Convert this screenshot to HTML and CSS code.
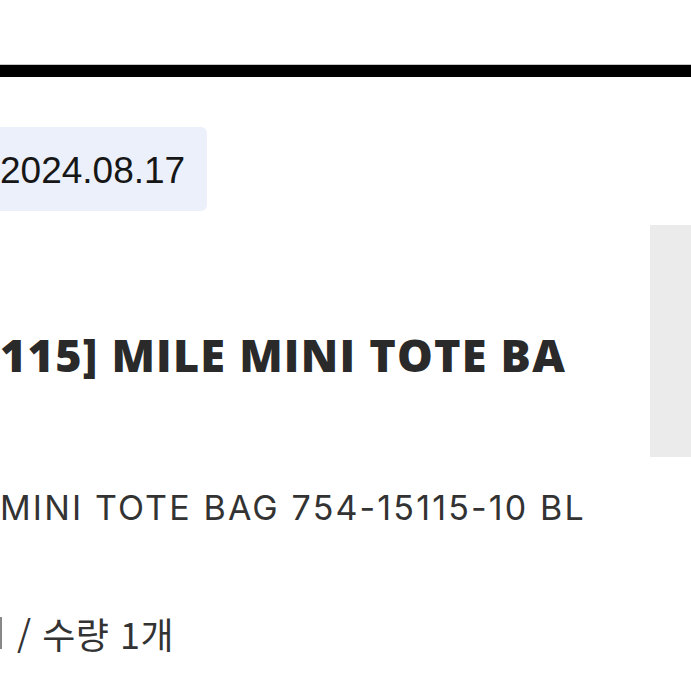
FILE: index.html
```html
<!DOCTYPE html>
<html lang="ko">
<head>
<meta charset="utf-8">
<link rel="stylesheet" href="styles.css">
<title>주문 상품</title>
</head>
<body>
<div class="page">
  <header class="top"></header>
  <div class="divider"></div>
  <main class="order">
    <section class="info">
      <div class="date-badge"><span class="date">2024.08.17</span></div>
      <h1 class="title">115] MILE MINI TOTE BA</h1>
      <p class="subtitle">MINI TOTE BAG 754-15115-10 BL</p>
      <p class="qty"><span class="edge"></span>/ 수량 1개</p>
    </section>
    <aside class="thumb"></aside>
  </main>
</div>
</body>
</html>
```
FILE: styles.css
```css
html, body {
  margin: 0;
  padding: 0;
  background: #fff;
}
body {
  overflow: hidden;
  width: 691px;
  height: 691px;
}
.page {
  width: 691px;
}
.top {
  box-sizing: border-box;
  height: 65px;
  border-bottom: 1px solid #c8c8c8;
}
.divider {
  height: 12px;
  background: #000;
}
.order {
  display: flex;
  align-items: flex-start;
}
.info {
  flex: 0 0 650px;
  min-width: 0;
}
.date-badge {
  margin-top: 50px;
  width: 207px;
  height: 84px;
  background: #ecf0fb;
  border-radius: 0 6px 6px 0;
  display: flex;
  align-items: center;
}
.date {
  font-family: "Liberation Sans", Arial, sans-serif;
  font-size: 37px;
  color: #161616;
  margin: 4px 0 0 0;
  white-space: nowrap;
}
.title {
  margin: 114px 0 0 0;
  white-space: nowrap;
  font-family: "Open Sans", Inter, sans-serif;
  font-weight: 800;
  font-size: 45px;
  letter-spacing: 1.2px;
  line-height: 60px;
  color: #2a2a2a;
}
.subtitle {
  margin: 100px 0 0 0;
  white-space: nowrap;
  font-family: Inter, "Noto Sans", sans-serif;
  font-size: 34px;
  letter-spacing: 2.15px;
  line-height: 46px;
  color: #333;
}
.qty {
  display: flex;
  align-items: center;
  margin: 78px 0 0 0;
  white-space: nowrap;
  font-family: "Noto Sans CJK KR", "Noto Sans", sans-serif;
  font-size: 36px;
  letter-spacing: 0.5px;
  line-height: 48px;
  color: #333;
}
.edge {
  width: 2px;
  height: 32px;
  background: #888;
  margin-right: 15px;
}
.thumb {
  flex: 0 0 200px;
  margin-top: 148px;
  height: 232px;
  background: #ebebeb;
}
```
